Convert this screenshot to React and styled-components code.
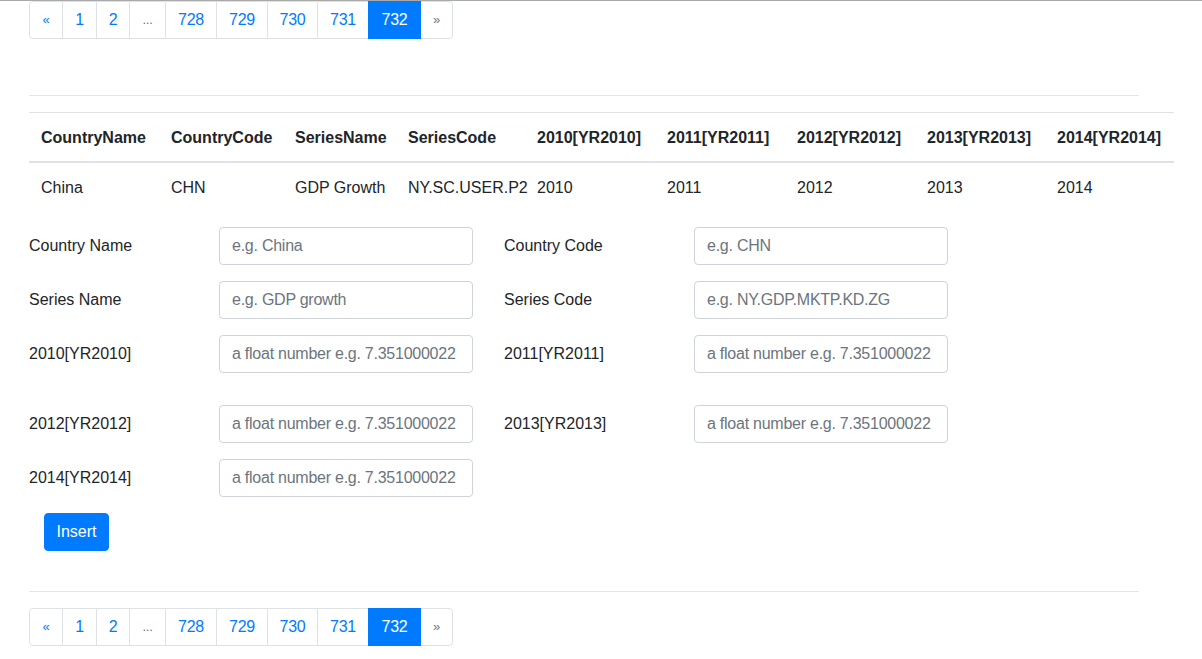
import React from 'react';
import styled, { createGlobalStyle } from 'styled-components';

const GlobalStyle = createGlobalStyle`
  * { box-sizing: border-box; }
  body {
    margin: 0;
    border-top: 1px solid #a9a9a9;
    background: #fff;
    font-family: "Liberation Sans", Arial, sans-serif;
    font-size: 16px;
    line-height: 1.5;
    color: #212529;
  }
`;

const Page = styled.div`
  margin-left: 29px;
  width: 1110px;
`;

const Pager = styled.ul`
  display: flex;
  list-style: none;
  margin: ${(p) => p.$top}px 0 0;
  padding: 0;
`;

const PageItem = styled.li`
  margin-left: -1px;
  &:first-child { margin-left: 0; }
  &:first-child a { border-radius: 4px 0 0 4px; }
  &:last-child a { border-radius: 0 4px 4px 0; }
`;

const PageLink = styled.a`
  display: flex;
  align-items: center;
  justify-content: center;
  height: 38px;
  width: ${(p) => p.$w}px;
  padding: 0;
  border: 1px solid ${(p) => (p.$active ? '#007bff' : '#dee2e6')};
  background: ${(p) => (p.$active ? '#007bff' : '#fff')};
  color: ${(p) => (p.$active ? '#fff' : p.$disabled ? '#6c757d' : '#007bff')};
  font-size: ${(p) => (p.$small ? 13 : 16)}px;
  letter-spacing: -0.2px;
  text-decoration: none;
  position: relative;
  z-index: ${(p) => (p.$active ? 1 : 0)};
`;

const Rule = styled.hr`
  margin: ${(p) => p.$top}px 0 0;
  border: 0;
  border-top: 1px solid #e5e5e5;
  width: 1110px;
`;

const Table = styled.table`
  margin-top: 16px;
  width: 1145px;
  border-collapse: collapse;
  table-layout: fixed;
`;

const Th = styled.th`
  width: ${(p) => p.$w}px;
  padding: 13px 12px 11px;
  text-align: left;
  font-weight: 700;
  border-top: 1px solid #dee2e6;
  border-bottom: 2px solid #dee2e6;
  white-space: nowrap;
`;

const Td = styled.td`
  padding: 13px 12px 11px;
  white-space: nowrap;
`;

const Form = styled.form`
  margin-top: 16px;
  display: flex;
  flex-direction: column;
`;

const FormRow = styled.div`
  display: flex;
  gap: 31px;
  margin-top: ${(p) => p.$top || 0}px;
`;

const Field = styled.div`
  display: flex;
  align-items: flex-start;
`;

const Label = styled.label`
  width: 190px;
  padding-top: 7px;
  line-height: 24px;
`;

const Input = styled.input`
  width: 254px;
  height: 38px;
  padding: 6px 12px;
  border: 1px solid #ced4da;
  border-radius: 4px;
  font-family: inherit;
  font-size: 16px;
  letter-spacing: -0.25px;
  color: #495057;
  &::placeholder { color: #6c757d; opacity: 1; }
`;

const Button = styled.button`
  align-self: flex-start;
  margin: 16px 0 0 15px;
  width: 65px;
  height: 38px;
  padding: 0;
  border: 1px solid #007bff;
  border-radius: 4px;
  background: #007bff;
  color: #fff;
  font-family: inherit;
  font-size: 16px;
`;

const pages = [
  { label: '«', small: true, w: 34 },
  { label: '1', w: 35 },
  { label: '2', w: 34 },
  { label: '...', disabled: true, small: true, w: 37 },
  { label: '728', w: 52 },
  { label: '729', w: 52 },
  { label: '730', w: 51 },
  { label: '731', w: 52 },
  { label: '732', active: true, w: 53 },
  { label: '»', small: true, disabled: true, w: 33 },
];

const Pagination = ({ top }) => (
  <Pager $top={top}>
    {pages.map((p) => (
      <PageItem key={p.label}>
        <PageLink href="#" $w={p.w} $active={p.active} $disabled={p.disabled} $small={p.small}>
          {p.label}
        </PageLink>
      </PageItem>
    ))}
  </Pager>
);

const columns = [
  ['CountryName', 130, 'China'],
  ['CountryCode', 124, 'CHN'],
  ['SeriesName', 113, 'GDP Growth'],
  ['SeriesCode', 129, 'NY.SC.USER.P2'],
  ['2010[YR2010]', 130, '2010'],
  ['2011[YR2011]', 130, '2011'],
  ['2012[YR2012]', 130, '2012'],
  ['2013[YR2013]', 130, '2013'],
  ['2014[YR2014]', 129, '2014'],
];

const FLOAT = 'a float number e.g. 7.351000022';

const rows = [
  { top: 0, fields: [['Country Name', 'e.g. China'], ['Country Code', 'e.g. CHN']] },
  { top: 16, fields: [['Series Name', 'e.g. GDP growth'], ['Series Code', 'e.g. NY.GDP.MKTP.KD.ZG']] },
  { top: 16, fields: [['2010[YR2010]', FLOAT], ['2011[YR2011]', FLOAT]] },
  { top: 32, fields: [['2012[YR2012]', FLOAT], ['2013[YR2013]', FLOAT]] },
  { top: 16, fields: [['2014[YR2014]', FLOAT]] },
];

export default function App() {
  return (
    <>
      <GlobalStyle />
      <Page>
        <Pagination top={0} />
        <Rule $top={56} />
        <Table>
          <thead>
            <tr>
              {columns.map(([h, w]) => (
                <Th key={h} $w={w}>{h}</Th>
              ))}
            </tr>
          </thead>
          <tbody>
            <tr>
              {columns.map(([h, , v]) => (
                <Td key={h}>{v}</Td>
              ))}
            </tr>
          </tbody>
        </Table>
        <Form onSubmit={(e) => e.preventDefault()}>
          {rows.map((r, i) => (
            <FormRow key={i} $top={r.top}>
              {r.fields.map(([label, ph]) => (
                <Field key={label}>
                  <Label>{label}</Label>
                  <Input placeholder={ph} />
                </Field>
              ))}
            </FormRow>
          ))}
          <Button type="submit">Insert</Button>
        </Form>
        <Rule $top={40} />
        <Pagination top={16} />
      </Page>
    </>
  );
}
